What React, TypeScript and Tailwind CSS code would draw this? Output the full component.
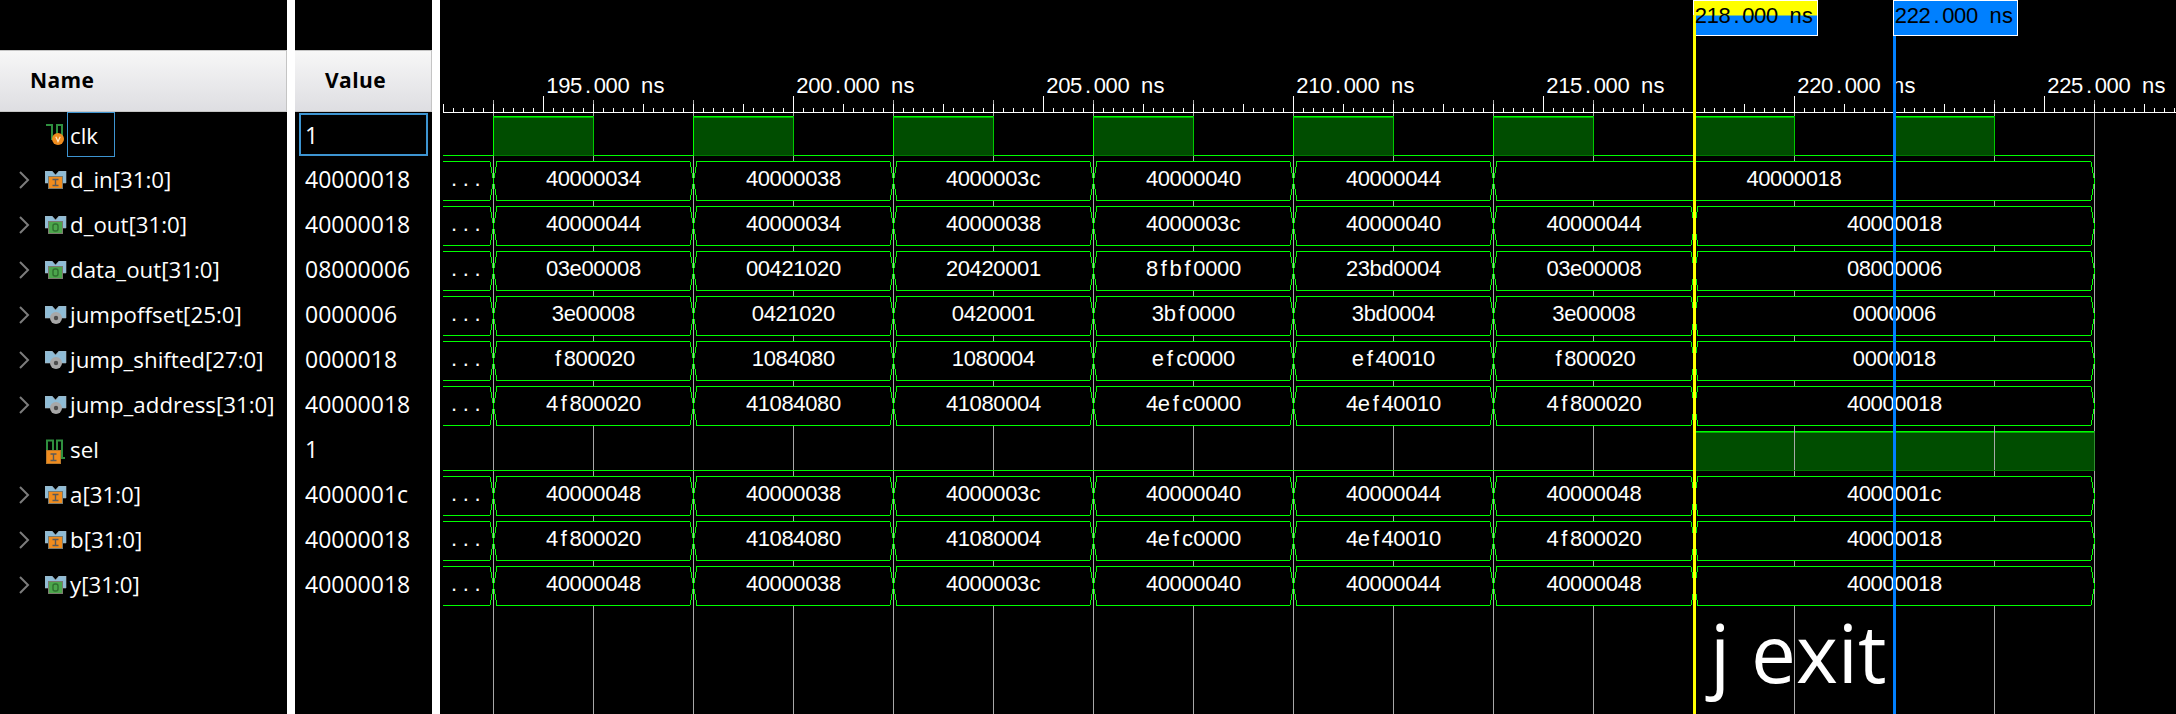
const uiFont = "font-['Open_Sans',sans-serif]";

type Kind = "in" | "out" | "node";

type Signal = {
  name: string;
  value: string;
  kind: Kind;
  bus: boolean;
  segments?: string[];
};

const signals: Signal[] = [
  { name: "clk", value: "1", kind: "in", bus: false },
  { name: "d_in[31:0]", value: "40000018", kind: "in", bus: true, segments: ["40000034", "40000038", "4000003c", "40000040", "40000044", "", "40000018"] },
  { name: "d_out[31:0]", value: "40000018", kind: "out", bus: true, segments: ["40000044", "40000034", "40000038", "4000003c", "40000040", "40000044", "40000018"] },
  { name: "data_out[31:0]", value: "08000006", kind: "out", bus: true, segments: ["03e00008", "00421020", "20420001", "8fbf0000", "23bd0004", "03e00008", "08000006"] },
  { name: "jumpoffset[25:0]", value: "0000006", kind: "node", bus: true, segments: ["3e00008", "0421020", "0420001", "3bf0000", "3bd0004", "3e00008", "0000006"] },
  { name: "jump_shifted[27:0]", value: "0000018", kind: "node", bus: true, segments: ["f800020", "1084080", "1080004", "efc0000", "ef40010", "f800020", "0000018"] },
  { name: "jump_address[31:0]", value: "40000018", kind: "node", bus: true, segments: ["4f800020", "41084080", "41080004", "4efc0000", "4ef40010", "4f800020", "40000018"] },
  { name: "sel", value: "1", kind: "in", bus: false },
  { name: "a[31:0]", value: "4000001c", kind: "in", bus: true, segments: ["40000048", "40000038", "4000003c", "40000040", "40000044", "40000048", "4000001c"] },
  { name: "b[31:0]", value: "40000018", kind: "in", bus: true, segments: ["4f800020", "41084080", "41080004", "4efc0000", "4ef40010", "4f800020", "40000018"] },
  { name: "y[31:0]", value: "40000018", kind: "out", bus: true, segments: ["40000048", "40000038", "4000003c", "40000040", "40000044", "40000048", "40000018"] },
];

// 50.04px per ns, 193ns sits on the left edge of the ruler
const xAt = (ns: number) => 1694 + 50.04 * (ns - 218);
const pxAt = (ns: number) => Math.floor(xAt(ns));
const rowTop = (i: number) => 116 + 45 * i;

const GREEN = "#00ff00";
const CELL = 11.85;
const GLYPH = 22;

const narrow: Record<string, number> = { ".": 0.278, f: 0.278, c: 0.5, s: 0.5 };

// the simulator font is fixed pitch, so every glyph gets its own cell
function cells(text: string, x0: number) {
  return text
    .split("")
    .map((ch, i) => {
      const w = (narrow[ch] ?? 0.556) * GLYPH;
      return (x0 + i * CELL + (CELL - w) / 2).toFixed(1);
    })
    .join(" ");
}

function WaveText({ text, x, y, fill = "#ffffff" }: { text: string; x: number; y: number; fill?: string }) {
  return (
    <text x={cells(text, x)} y={y} fill={fill} fontSize={GLYPH} fontFamily="'Liberation Sans', sans-serif">
      {text}
    </text>
  );
}

function Chevron() {
  return (
    <svg width="12" height="20" viewBox="0 0 12 20" className="block">
      <path d="M2 2 L10 10 L2 18" fill="none" stroke="#7c7c7c" strokeWidth="2" />
    </svg>
  );
}

function KindBox({ kind }: { kind: Kind }) {
  if (kind === "node") {
    return (
      <>
        <circle cx="11" cy="12" r="6" fill="#a8a8a8" />
        <circle cx="11" cy="12" r="2.2" fill="#4d4d4d" />
      </>
    );
  }
  const fill = kind === "in" ? "#f08c1e" : "#4ca64c";
  return (
    <>
      <rect x="3.5" y="5.5" width="14" height="12" fill={fill} stroke="#7b7b6e" />
      {kind === "in" ? (
        <path d="M7.5 8.5 H13.5 M10.5 8.5 V14.5 M7.5 14.5 H13.5" stroke="#5a5a5a" strokeWidth="1.4" fill="none" />
      ) : (
        <rect x="8" y="8" width="5" height="7" rx="2" fill="none" stroke="#2f6f2f" strokeWidth="1.4" />
      )}
    </>
  );
}

function BusIcon({ kind }: { kind: Kind }) {
  return (
    <svg width="22" height="18" viewBox="0 0 22 18" className="block">
      <path d="M0 0 H7 L10.5 4 L14 0 H21 V12 H0 Z" fill="#8fbcd6" stroke="#a9b4bb" strokeWidth="0.6" />
      <KindBox kind={kind} />
    </svg>
  );
}

function BitIcon({ name }: { name: string }) {
  if (name === "clk") {
    return (
      <svg width="22" height="24" viewBox="0 0 22 24" className="block">
        <path d="M1 2 H7 V17 M12 17 V2 H17 V17" fill="none" stroke="#2f8f3f" strokeWidth="2" />
        <circle cx="13" cy="16" r="6" fill="#f08c1e" />
        <path d="M10.8 13.8 L13 18.5 L15.2 13.8" fill="none" stroke="#ffe9c8" strokeWidth="1.2" />
      </svg>
    );
  }
  return (
    <svg width="22" height="28" viewBox="0 0 22 28" className="block">
      <path d="M2 15 V4.5 H8 V18 M12 18 V4.5 H17 V22 H20" fill="none" stroke="#2f8f3f" strokeWidth="2" />
      <rect x="1.5" y="14.5" width="14" height="13" fill="#f08c1e" stroke="#b9782a" />
      <path d="M5.5 18 H11.5 M8.5 18 V24.5 M5.5 24.5 H11.5" stroke="#5a5a5a" strokeWidth="1.4" fill="none" />
    </svg>
  );
}

function NameRow({ signal, selected }: { signal: Signal; selected: boolean }) {
  return (
    <div className="flex h-[45px] items-center">
      <div className="flex w-[45px] shrink-0 justify-start pl-[18px]">{signal.bus && <Chevron />}</div>
      <div className="flex w-[22px] shrink-0 justify-start">{signal.bus ? <BusIcon kind={signal.kind} /> : <BitIcon name={signal.name} />}</div>
      <span
        className={
          selected
            ? "flex h-[45px] items-center border border-[#3d94d1] pt-[2px] pr-[16px] pl-[2px] text-[22.3px] whitespace-nowrap text-white"
            : "pl-[3px] text-[22.3px] whitespace-nowrap text-white"
        }
      >
        {signal.name}
      </span>
    </div>
  );
}

function ValueRow({ signal, selected }: { signal: Signal; selected: boolean }) {
  return (
    <div className="flex h-[45px] items-center pl-[4px]">
      <span
        className={
          selected
            ? "flex h-[43px] w-[129px] items-center border-2 border-[#3d94d1] pt-[2px] pl-[4px] text-[23px] text-white"
            : "pl-[6px] text-[23px] text-white"
        }
      >
        {signal.value}
      </span>
    </div>
  );
}

function ColumnHead({ label }: { label: string }) {
  return (
    <div className="flex h-[62px] items-center border-y border-r border-[#c4c4c4] bg-gradient-to-b from-[#f7f7f7] to-[#dedee2] pl-[30px] text-[21px] font-bold tracking-[0.4px] text-black">
      {label}
    </div>
  );
}

function Ruler() {
  const ticks = [];
  for (let i = 0; i <= 173; i++) {
    const ns = 193 + i * 0.2;
    const x = pxAt(ns) + 0.5;
    const tall = i % 5 === 0 ? 8 : 4;
    ticks.push(<line key={i} x1={x} x2={x} y1={112 - tall} y2={112} stroke="#ffffff" />);
  }
  const labels = [195, 200, 205, 210, 215, 220, 225];
  return (
    <g>
      <line x1={443} x2={2176} y1={112.5} y2={112.5} stroke="#ffffff" />
      {ticks}
      {labels.map((ns) => {
        const x = pxAt(ns) + 0.5;
        return (
          <g key={ns}>
            <line x1={x} x2={x} y1={96} y2={112} stroke="#ffffff" />
            <WaveText text={`${ns}.000 ns`} x={x + 3} y={93} />
          </g>
        );
      })}
    </g>
  );
}

function BusRow({ row, segments }: { row: number; segments: string[] }) {
  const top = rowTop(row) + 0.5;
  const bottom = top + 39;
  const mid = (top + bottom) / 2;
  const edges = [194, 198, 202, 206, 210, 214, 218, 226];
  const parts: { from: number; to: number; label: string }[] = [];
  segments.forEach((label, i) => {
    if (label === "") return;
    const prev = segments[i - 1] === "" ? i - 1 : i;
    parts.push({ from: edges[prev], to: edges[i + 1], label });
  });
  const first = pxAt(194) + 0.5;
  return (
    <g>
      <path
        d={`M443 ${top} H${first - 3.5} L${first} ${mid} L${first - 3.5} ${bottom} H443`}
        fill="#000000"
        stroke={GREEN}
        shapeRendering="crispEdges"
      />
      <WaveText text="..." x={448} y={top + 24} />
      {parts.map((p) => {
        const a = pxAt(p.from) + 0.5;
        const b = pxAt(p.to) + 0.5;
        const w = p.label.length * CELL;
        return (
          <g key={p.from}>
            <path
              d={`M${a} ${mid} L${a + 3.5} ${top} H${b - 3.5} L${b} ${mid} L${b - 3.5} ${bottom} H${a + 3.5} Z`}
              fill="#000000"
              stroke={GREEN}
              shapeRendering="crispEdges"
            />
            <WaveText text={p.label} x={(a + b) / 2 - w / 2} y={top + 24} />
          </g>
        );
      })}
    </g>
  );
}

function HighBlock({ from, to, row }: { from: number; to: number; row: number }) {
  const a = pxAt(from);
  const b = pxAt(to);
  const top = rowTop(row);
  return (
    <g shapeRendering="crispEdges">
      <rect x={a} y={top} width={b - a} height={39} fill="#004d00" />
      <line x1={a} x2={b} y1={top + 0.5} y2={top + 0.5} stroke={GREEN} />
      <line x1={a} x2={b} y1={top + 1.5} y2={top + 1.5} stroke="#00b000" />
      <line x1={a} x2={b} y1={top + 39.5} y2={top + 39.5} stroke="#007a00" />
      <line x1={a + 0.5} x2={a + 0.5} y1={top} y2={top + 40} stroke={GREEN} />
      <line x1={b + 0.5} x2={b + 0.5} y1={top} y2={top + 40} stroke={row === 0 ? "#00c800" : "#2f8f2f"} />
    </g>
  );
}

function Waveform() {
  const grid = [];
  for (let ns = 194; ns <= 226; ns += 2) grid.push(pxAt(ns) + 0.5);
  const clkHigh = [194, 198, 202, 206, 210, 214, 218, 222];
  return (
    <svg width="1736" height="714" viewBox="440 0 1736 714" className="block">
      {grid.map((x) => (
        <line key={x} x1={x} x2={x} y1={100} y2={714} stroke="#a8a8a8" />
      ))}
      <Ruler />

      <line x1={443} x2={pxAt(226)} y1={rowTop(0) + 39.5} y2={rowTop(0) + 39.5} stroke={GREEN} shapeRendering="crispEdges" />
      {clkHigh.map((ns) => (
        <HighBlock key={ns} from={ns} to={ns + 2} row={0} />
      ))}

      {signals.map((s, i) => (s.segments ? <BusRow key={s.name} row={i} segments={s.segments} /> : null))}

      <line x1={443} x2={pxAt(218)} y1={rowTop(7) + 39.5} y2={rowTop(7) + 39.5} stroke={GREEN} shapeRendering="crispEdges" />
      <HighBlock from={218} to={226} row={7} />
      {[220, 222, 224].map((ns) => (
        <line key={ns} x1={pxAt(ns) + 0.5} x2={pxAt(ns) + 0.5} y1={rowTop(7)} y2={rowTop(7) + 39} stroke="#a8a8a8" />
      ))}

      <text x="1710" y="683" fill="#ffffff" fontSize="80" fontFamily="'Open Sans', sans-serif">
        j exit
      </text>

      {/* main cursor */}
      <rect x="1693.5" y="0.5" width="124" height="35" fill="#0080ff" stroke="#ffffff" />
      <rect x="1694" y="1" width="123" height="14.5" fill="#ffff00" />
      <rect x="1693" y="15" width="3" height="699" fill="#ffff00" />
      <WaveText text="218.000 ns" x={1695} y={23} fill="#000000" />

      {/* second marker */}
      <rect x="1893" y="35" width="3" height="679" fill="#0080ff" />
      <rect x="1893.5" y="0.5" width="124" height="35" fill="#0080ff" stroke="#ffffff" />
      <WaveText text="222.000 ns" x={1895} y={23} fill="#000000" />
    </svg>
  );
}

export default function App() {
  return (
    <div className={`flex h-[714px] w-[2176px] overflow-hidden bg-white ${uiFont}`}>
      <div className="w-[287px] shrink-0 bg-black pt-[50px]">
        <ColumnHead label="Name" />
        {signals.map((s, i) => (
          <NameRow key={s.name} signal={s} selected={i === 0} />
        ))}
      </div>
      <div className="ml-[8px] w-[137px] shrink-0 bg-black pt-[50px]">
        <ColumnHead label="Value" />
        {signals.map((s, i) => (
          <ValueRow key={s.name} signal={s} selected={i === 0} />
        ))}
      </div>
      <div className="ml-[8px] flex-1 bg-black">
        <Waveform />
      </div>
    </div>
  );
}
